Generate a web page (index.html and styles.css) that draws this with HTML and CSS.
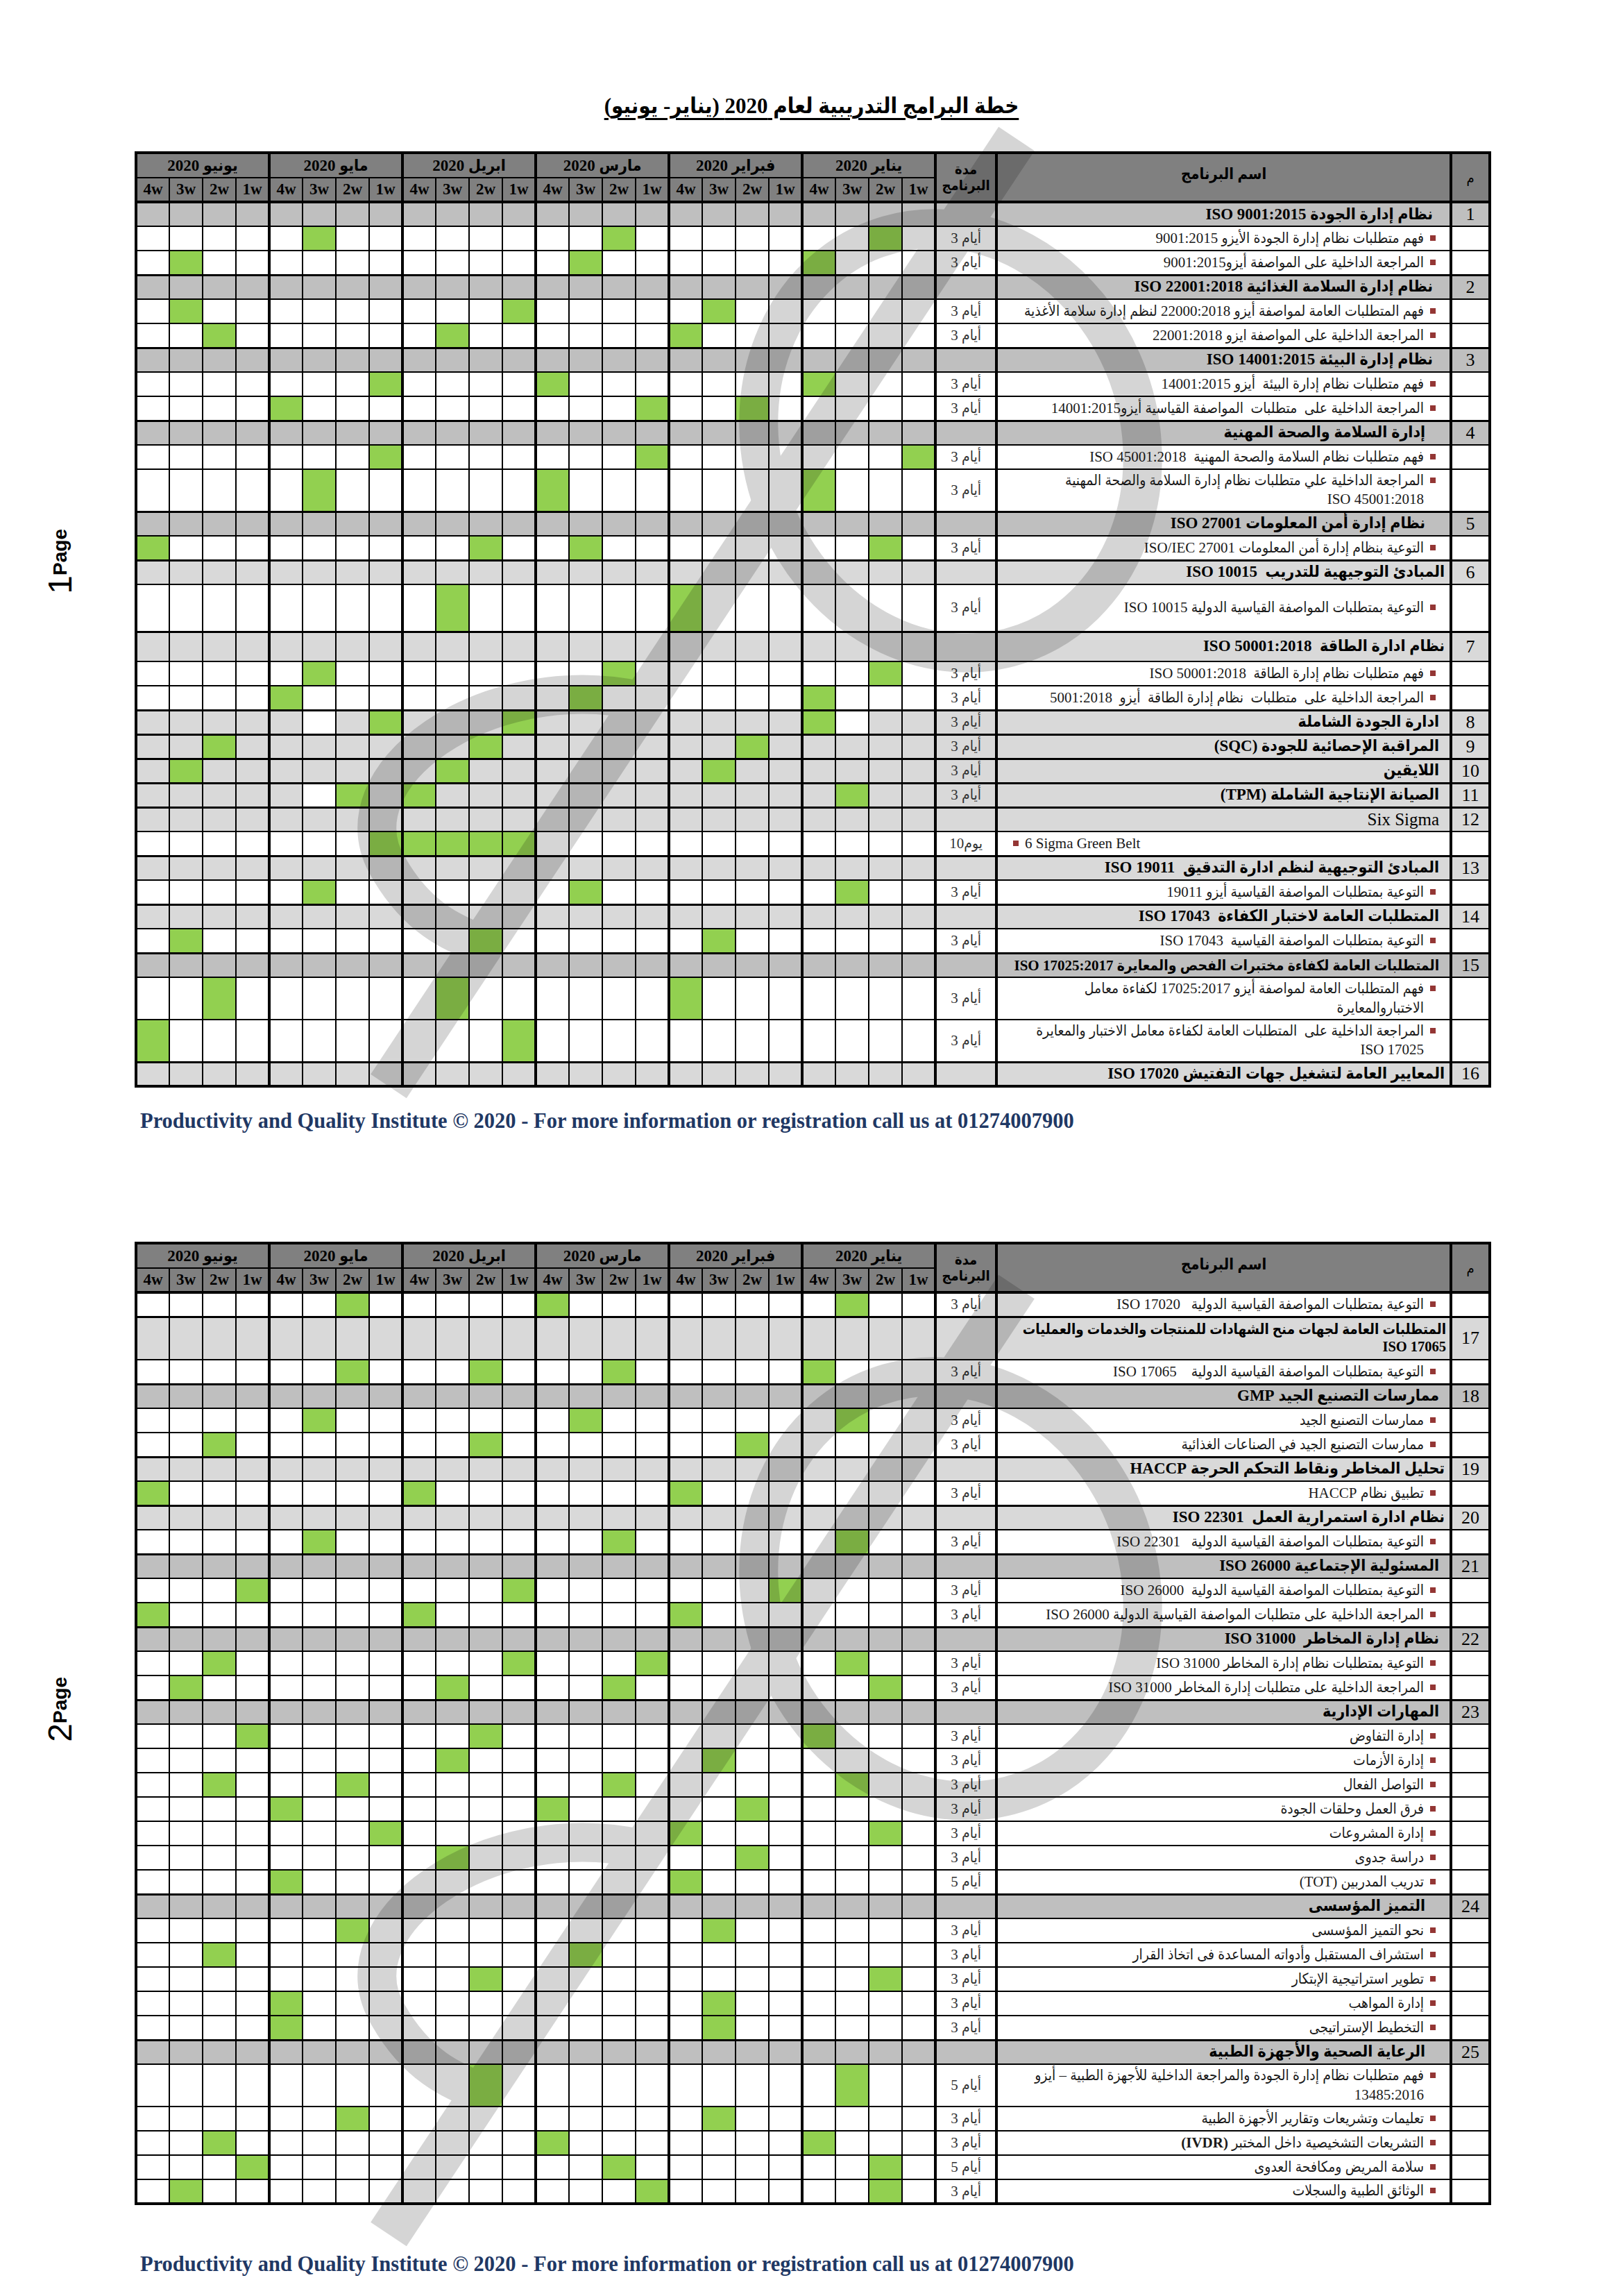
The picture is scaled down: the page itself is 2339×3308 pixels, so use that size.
FILE: index.html
```html
<!DOCTYPE html>
<html lang="ar">
<head>
<meta charset="utf-8">
<title>خطة البرامج التدريبية لعام 2020</title>
<link rel="stylesheet" href="styles.css">
</head>
<body>
<section class="page p1">
  <div class="side"><div class="pagelabel"><span class="pn">1</span><span class="pw">Page</span></div></div>
  <div class="main">
    <h1 class="title">خطة البرامج التدريبية لعام 2020 (يناير- يونيو)</h1>
    <table class="plan">
      <colgroup>
        <col class="cw"><col class="cw"><col class="cw"><col class="cw"><col class="cw"><col class="cw"><col class="cw"><col class="cw"><col class="cw"><col class="cw"><col class="cw"><col class="cw"><col class="cw"><col class="cw"><col class="cw"><col class="cw"><col class="cw"><col class="cw"><col class="cw"><col class="cw"><col class="cw"><col class="cw"><col class="cw"><col class="cw">
        <col class="cd"><col class="cn"><col class="cm">
      </colgroup>
      <tr class="hm"><td colspan="4">يونيو 2020</td><td colspan="4">مايو 2020</td><td colspan="4">ابريل 2020</td><td colspan="4">مارس 2020</td><td colspan="4">فبراير 2020</td><td colspan="4">يناير 2020</td><td rowspan="2" class="hdur">مدة<br>البرنامج</td><td rowspan="2" class="hname">اسم البرنامج</td><td rowspan="2" class="hnum">م</td></tr>
      <tr class="hw"><td>4w</td><td>3w</td><td>2w</td><td>1w</td><td>4w</td><td>3w</td><td>2w</td><td>1w</td><td>4w</td><td>3w</td><td>2w</td><td>1w</td><td>4w</td><td>3w</td><td>2w</td><td>1w</td><td>4w</td><td>3w</td><td>2w</td><td>1w</td><td>4w</td><td>3w</td><td>2w</td><td>1w</td></tr>

      <tr class="grp dark"><td></td><td></td><td></td><td></td><td></td><td></td><td></td><td></td><td></td><td></td><td></td><td></td><td></td><td></td><td></td><td></td><td></td><td></td><td></td><td></td><td></td><td></td><td></td><td></td><td class="d"></td><td class="nm pr24"><div class="gt">نظام إدارة الجودة ISO 9001:2015</div></td><td class="num">1</td></tr>
      <tr class="it"><td></td><td></td><td></td><td></td><td></td><td class="g"></td><td></td><td></td><td></td><td></td><td></td><td></td><td></td><td></td><td class="g"></td><td></td><td></td><td></td><td></td><td></td><td></td><td></td><td class="g"></td><td></td><td class="d">3 أيام</td><td class="nm"><div class="itm"><i class="b"></i><span>فهم متطلبات نظام إدارة الجودة الأيزو 9001:2015</span></div></td><td class="num"></td></tr>
      <tr class="it"><td></td><td class="g"></td><td></td><td></td><td></td><td></td><td></td><td></td><td></td><td></td><td></td><td></td><td></td><td class="g"></td><td></td><td></td><td></td><td></td><td></td><td></td><td class="g"></td><td></td><td></td><td></td><td class="d">3 أيام</td><td class="nm"><div class="itm"><i class="b"></i><span>المراجعة الداخلية على المواصفة أيزو9001:2015</span></div></td><td class="num"></td></tr>

      <tr class="grp dark"><td></td><td></td><td></td><td></td><td></td><td></td><td></td><td></td><td></td><td></td><td></td><td></td><td></td><td></td><td></td><td></td><td></td><td></td><td></td><td></td><td></td><td></td><td></td><td></td><td class="d"></td><td class="nm pr24"><div class="gt">نظام إدارة السلامة الغذائية ISO 22001:2018</div></td><td class="num">2</td></tr>
      <tr class="it"><td></td><td class="g"></td><td></td><td></td><td></td><td></td><td></td><td></td><td></td><td></td><td></td><td class="g"></td><td></td><td></td><td></td><td></td><td></td><td class="g"></td><td></td><td></td><td></td><td></td><td></td><td></td><td class="d">3 أيام</td><td class="nm"><div class="itm"><i class="b"></i><span>فهم المتطلبات العامة لمواصفة أيزو 22000:2018 لنظم إدارة سلامة الأغذية</span></div></td><td class="num"></td></tr>
      <tr class="it"><td></td><td></td><td class="g"></td><td></td><td></td><td></td><td></td><td></td><td></td><td class="g"></td><td></td><td></td><td></td><td></td><td></td><td></td><td class="g"></td><td></td><td></td><td></td><td></td><td></td><td></td><td></td><td class="d">3 أيام</td><td class="nm"><div class="itm"><i class="b"></i><span>المراجعة الداخلية على المواصفة ايزو 22001:2018</span></div></td><td class="num"></td></tr>

      <tr class="grp dark"><td></td><td></td><td></td><td></td><td></td><td></td><td></td><td></td><td></td><td></td><td></td><td></td><td></td><td></td><td></td><td></td><td></td><td></td><td></td><td></td><td></td><td></td><td></td><td></td><td class="d"></td><td class="nm pr24"><div class="gt">نظام إدارة البيئة ISO 14001:2015</div></td><td class="num">3</td></tr>
      <tr class="it"><td></td><td></td><td></td><td></td><td></td><td></td><td></td><td class="g"></td><td></td><td></td><td></td><td></td><td class="g"></td><td></td><td></td><td></td><td></td><td></td><td></td><td></td><td class="g"></td><td></td><td></td><td></td><td class="d">3 أيام</td><td class="nm"><div class="itm"><i class="b"></i><span>فهم متطلبات نظام إدارة البيئة&nbsp; أيزو 14001:2015</span></div></td><td class="num"></td></tr>
      <tr class="it"><td></td><td></td><td></td><td></td><td class="g"></td><td></td><td></td><td></td><td></td><td></td><td></td><td></td><td></td><td></td><td></td><td class="g"></td><td></td><td></td><td class="g"></td><td></td><td></td><td></td><td></td><td></td><td class="d">3 أيام</td><td class="nm"><div class="itm"><i class="b"></i><span>المراجعة الداخلية على&nbsp; متطلبات&nbsp; المواصفة القياسية أيزو14001:2015</span></div></td><td class="num"></td></tr>

      <tr class="grp dark"><td></td><td></td><td></td><td></td><td></td><td></td><td></td><td></td><td></td><td></td><td></td><td></td><td></td><td></td><td></td><td></td><td></td><td></td><td></td><td></td><td></td><td></td><td></td><td></td><td class="d"></td><td class="nm pr35"><div class="gt">إدارة السلامة والصحة المهنية</div></td><td class="num">4</td></tr>
      <tr class="it"><td></td><td></td><td></td><td></td><td></td><td></td><td></td><td class="g"></td><td></td><td></td><td></td><td></td><td></td><td></td><td></td><td class="g"></td><td></td><td></td><td></td><td></td><td></td><td></td><td></td><td class="g"></td><td class="d">3 أيام</td><td class="nm"><div class="itm"><i class="b"></i><span>فهم متطلبات نظام السلامة والصحة المهنية&nbsp; ISO 45001:2018</span></div></td><td class="num"></td></tr>
      <tr class="it tall"><td></td><td></td><td></td><td></td><td></td><td class="g"></td><td></td><td></td><td></td><td></td><td></td><td></td><td class="g"></td><td></td><td></td><td></td><td></td><td></td><td></td><td></td><td class="g"></td><td></td><td></td><td></td><td class="d">3 أيام</td><td class="nm"><div class="itm"><i class="b"></i><span>المراجعة الداخلية علي متطلبات نظام إدارة السلامة والصحة المهنية<br>ISO 45001:2018</span></div></td><td class="num"></td></tr>

      <tr class="grp dark"><td></td><td></td><td></td><td></td><td></td><td></td><td></td><td></td><td></td><td></td><td></td><td></td><td></td><td></td><td></td><td></td><td></td><td></td><td></td><td></td><td></td><td></td><td></td><td></td><td class="d"></td><td class="nm pr35"><div class="gt">نظام إدارة أمن المعلومات ISO 27001</div></td><td class="num">5</td></tr>
      <tr class="it"><td class="g"></td><td></td><td></td><td></td><td></td><td></td><td></td><td></td><td></td><td></td><td class="g"></td><td></td><td></td><td class="g"></td><td></td><td></td><td></td><td></td><td></td><td></td><td></td><td></td><td class="g"></td><td></td><td class="d">3 أيام</td><td class="nm"><div class="itm"><i class="b"></i><span>التوعية بنظام إدارة أمن المعلومات ISO/IEC 27001</span></div></td><td class="num"></td></tr>

      <tr class="grp light"><td></td><td></td><td></td><td></td><td></td><td></td><td></td><td></td><td></td><td></td><td></td><td></td><td></td><td></td><td></td><td></td><td></td><td></td><td></td><td></td><td></td><td></td><td></td><td></td><td class="d"></td><td class="nm pr7"><div class="gt">المبادئ التوجيهية للتدريب&nbsp; ISO 10015</div></td><td class="num">6</td></tr>
      <tr class="it t68"><td></td><td></td><td></td><td></td><td></td><td></td><td></td><td></td><td></td><td class="g"></td><td></td><td></td><td></td><td></td><td></td><td></td><td class="g"></td><td></td><td></td><td></td><td></td><td></td><td></td><td></td><td class="d">3 أيام</td><td class="nm"><div class="itm"><i class="b"></i><span>التوعية بمتطلبات المواصفة القياسية الدولية ISO 10015</span></div></td><td class="num"></td></tr>

      <tr class="grp light t43"><td></td><td></td><td></td><td></td><td></td><td></td><td></td><td></td><td></td><td></td><td></td><td></td><td></td><td></td><td></td><td></td><td></td><td></td><td></td><td></td><td></td><td></td><td></td><td></td><td class="d"></td><td class="nm pr7"><div class="gt">نظام ادارة الطاقة&nbsp; ISO 50001:2018</div></td><td class="num">7</td></tr>
      <tr class="it"><td></td><td></td><td></td><td></td><td></td><td class="g"></td><td></td><td></td><td></td><td></td><td></td><td></td><td></td><td></td><td class="g"></td><td></td><td></td><td></td><td></td><td></td><td></td><td></td><td class="g"></td><td></td><td class="d">3 أيام</td><td class="nm"><div class="itm"><i class="b"></i><span>فهم متطلبات نظام إدارة الطاقة&nbsp; ISO 50001:2018</span></div></td><td class="num"></td></tr>
      <tr class="it"><td></td><td></td><td></td><td></td><td class="g"></td><td></td><td></td><td></td><td></td><td></td><td></td><td></td><td></td><td class="g"></td><td></td><td></td><td></td><td></td><td></td><td></td><td class="g"></td><td></td><td></td><td></td><td class="d">3 أيام</td><td class="nm"><div class="itm"><i class="b"></i><span>المراجعة الداخلية على&nbsp; متطلبات&nbsp; نظام إدارة الطاقة&nbsp; أيزو&nbsp; 5001:2018</span></div></td><td class="num"></td></tr>

      <tr class="solo light"><td></td><td></td><td></td><td></td><td></td><td class="w"></td><td></td><td class="g"></td><td></td><td></td><td></td><td class="g"></td><td></td><td></td><td></td><td></td><td></td><td></td><td></td><td></td><td class="g"></td><td class="w"></td><td></td><td></td><td class="d">3 أيام</td><td class="nm pr15"><div class="gt">ادارة الجودة الشاملة</div></td><td class="num">8</td></tr>
      <tr class="solo light"><td></td><td></td><td class="g"></td><td></td><td></td><td></td><td></td><td></td><td></td><td></td><td class="g"></td><td></td><td></td><td></td><td></td><td></td><td></td><td></td><td class="g"></td><td></td><td></td><td></td><td></td><td></td><td class="d">3 أيام</td><td class="nm pr15"><div class="gt">المراقبة الإحصائية للجودة (SQC)</div></td><td class="num">9</td></tr>
      <tr class="solo light"><td></td><td class="g"></td><td></td><td></td><td></td><td></td><td></td><td></td><td></td><td class="g"></td><td></td><td></td><td></td><td></td><td></td><td></td><td></td><td class="g"></td><td></td><td></td><td></td><td></td><td></td><td></td><td class="d">3 أيام</td><td class="nm pr15"><div class="gt">اللايقين</div></td><td class="num">10</td></tr>
      <tr class="solo light"><td></td><td></td><td></td><td></td><td></td><td class="w"></td><td class="g"></td><td></td><td class="g"></td><td></td><td></td><td></td><td></td><td></td><td></td><td></td><td></td><td></td><td></td><td></td><td></td><td class="g"></td><td></td><td></td><td class="d">3 أيام</td><td class="nm pr15"><div class="gt">الصيانة الإنتاجية الشاملة (TPM)</div></td><td class="num">11</td></tr>
      <tr class="solo light"><td></td><td></td><td></td><td></td><td></td><td></td><td></td><td></td><td></td><td></td><td></td><td></td><td></td><td></td><td></td><td></td><td></td><td></td><td></td><td></td><td></td><td></td><td></td><td></td><td class="d"></td><td class="nm pr15"><div class="gt reg">Six Sigma</div></td><td class="num">12</td></tr>
      <tr class="it"><td></td><td></td><td></td><td></td><td></td><td></td><td></td><td class="g"></td><td class="g"></td><td class="g"></td><td class="g"></td><td class="g"></td><td></td><td></td><td></td><td></td><td></td><td></td><td></td><td></td><td></td><td></td><td></td><td></td><td class="d">10يوم</td><td class="nm ltr"><div class="itm"><i class="b"></i><span>6 Sigma Green Belt</span></div></td><td class="num"></td></tr>

      <tr class="grp light"><td></td><td></td><td></td><td></td><td></td><td></td><td></td><td></td><td></td><td></td><td></td><td></td><td></td><td></td><td></td><td></td><td></td><td></td><td></td><td></td><td></td><td></td><td></td><td></td><td class="d"></td><td class="nm pr15"><div class="gt">المبادئ التوجيهية لنظم ادارة التدقيق&nbsp; ISO 19011</div></td><td class="num">13</td></tr>
      <tr class="it"><td></td><td></td><td></td><td></td><td></td><td class="g"></td><td></td><td></td><td></td><td></td><td></td><td></td><td></td><td class="g"></td><td></td><td></td><td></td><td></td><td></td><td></td><td></td><td class="g"></td><td></td><td></td><td class="d">3 أيام</td><td class="nm"><div class="itm"><i class="b"></i><span>التوعية بمتطلبات المواصفة القياسية أيزو 19011</span></div></td><td class="num"></td></tr>

      <tr class="grp light"><td></td><td></td><td></td><td></td><td></td><td></td><td></td><td></td><td></td><td></td><td></td><td></td><td></td><td></td><td></td><td></td><td></td><td></td><td></td><td></td><td></td><td></td><td></td><td></td><td class="d"></td><td class="nm pr15"><div class="gt">المتطلبات العامة لاختبار الكفاءة&nbsp; ISO 17043</div></td><td class="num">14</td></tr>
      <tr class="it"><td></td><td class="g"></td><td></td><td></td><td></td><td></td><td></td><td></td><td></td><td></td><td class="g"></td><td></td><td></td><td></td><td></td><td></td><td></td><td class="g"></td><td></td><td></td><td></td><td></td><td></td><td></td><td class="d">3 أيام</td><td class="nm"><div class="itm"><i class="b"></i><span>التوعية بمتطلبات المواصفة القياسية&nbsp; ISO 17043</span></div></td><td class="num"></td></tr>

      <tr class="grp dark"><td></td><td></td><td></td><td></td><td></td><td></td><td></td><td></td><td></td><td></td><td></td><td></td><td></td><td></td><td></td><td></td><td></td><td></td><td></td><td></td><td></td><td></td><td></td><td></td><td class="d"></td><td class="nm pr15"><div class="gt sm">المتطلبات العامة لكفاءة مختبرات الفحص والمعايرة ISO 17025:2017</div></td><td class="num">15</td></tr>
      <tr class="it tall"><td></td><td></td><td class="g"></td><td></td><td></td><td></td><td></td><td></td><td></td><td class="g"></td><td></td><td></td><td></td><td></td><td></td><td></td><td class="g"></td><td></td><td></td><td></td><td></td><td></td><td></td><td></td><td class="d">3 أيام</td><td class="nm"><div class="itm"><i class="b"></i><span>فهم المتطلبات العامة لمواصفة أيزو 17025:2017 لكفاءة معامل<br>الاختباروالمعايرة</span></div></td><td class="num"></td></tr>
      <tr class="it tall"><td class="g"></td><td></td><td></td><td></td><td></td><td></td><td></td><td></td><td></td><td></td><td></td><td class="g"></td><td></td><td></td><td></td><td></td><td></td><td></td><td></td><td></td><td></td><td></td><td></td><td></td><td class="d">3 أيام</td><td class="nm"><div class="itm"><i class="b"></i><span>المراجعة الداخلية على&nbsp; المتطلبات العامة لكفاءة معامل الاختبار والمعايرة<br>ISO 17025</span></div></td><td class="num"></td></tr>

      <tr class="grp light"><td></td><td></td><td></td><td></td><td></td><td></td><td></td><td></td><td></td><td></td><td></td><td></td><td></td><td></td><td></td><td></td><td></td><td></td><td></td><td></td><td></td><td></td><td></td><td></td><td class="d"></td><td class="nm pr7"><div class="gt">المعايير العامة لتشغيل جهات التفتيش ISO 17020</div></td><td class="num">16</td></tr>
    </table>
    <p class="foot">Productivity and Quality Institute © 2020 - For more information or registration call us at 01274007900</p>
  </div>
  <svg class="wm" viewBox="0 0 2339 1654" aria-hidden="true">
    <g opacity="0.16" fill="none" stroke="#000">
      <ellipse cx="1370" cy="635" rx="272" ry="310" transform="rotate(-20 1370 635)" stroke-width="56"/>
      <path d="M1465 200 L560 1565" stroke-width="62"/>
      <path d="M925 1010 C700 960 480 1120 560 1250 C600 1320 650 1345 700 1362" stroke-width="56"/>
    </g>
  </svg>
</section>

<section class="page p2">
  <div class="side"><div class="pagelabel"><span class="pn">2</span><span class="pw">Page</span></div></div>
  <div class="main">
    <table class="plan">
      <colgroup>
        <col class="cw"><col class="cw"><col class="cw"><col class="cw"><col class="cw"><col class="cw"><col class="cw"><col class="cw"><col class="cw"><col class="cw"><col class="cw"><col class="cw"><col class="cw"><col class="cw"><col class="cw"><col class="cw"><col class="cw"><col class="cw"><col class="cw"><col class="cw"><col class="cw"><col class="cw"><col class="cw"><col class="cw">
        <col class="cd"><col class="cn"><col class="cm">
      </colgroup>
      <tr class="hm"><td colspan="4">يونيو 2020</td><td colspan="4">مايو 2020</td><td colspan="4">ابريل 2020</td><td colspan="4">مارس 2020</td><td colspan="4">فبراير 2020</td><td colspan="4">يناير 2020</td><td rowspan="2" class="hdur">مدة<br>البرنامج</td><td rowspan="2" class="hname">اسم البرنامج</td><td rowspan="2" class="hnum">م</td></tr>
      <tr class="hw"><td>4w</td><td>3w</td><td>2w</td><td>1w</td><td>4w</td><td>3w</td><td>2w</td><td>1w</td><td>4w</td><td>3w</td><td>2w</td><td>1w</td><td>4w</td><td>3w</td><td>2w</td><td>1w</td><td>4w</td><td>3w</td><td>2w</td><td>1w</td><td>4w</td><td>3w</td><td>2w</td><td>1w</td></tr>

      <tr class="it"><td></td><td></td><td></td><td></td><td></td><td></td><td class="g"></td><td></td><td></td><td></td><td></td><td></td><td class="g"></td><td></td><td></td><td></td><td></td><td></td><td></td><td></td><td></td><td class="g"></td><td></td><td></td><td class="d">3 أيام</td><td class="nm"><div class="itm"><i class="b"></i><span>التوعية بمتطلبات المواصفة القياسية الدولية&nbsp;&nbsp; ISO 17020</span></div></td><td class="num"></td></tr>

      <tr class="grp light tall2"><td></td><td></td><td></td><td></td><td></td><td></td><td></td><td></td><td></td><td></td><td></td><td></td><td></td><td></td><td></td><td></td><td></td><td></td><td></td><td></td><td></td><td></td><td></td><td></td><td class="d"></td><td class="nm pr5"><div class="gt one">المتطلبات العامة لجهات منح الشهادات للمنتجات والخدمات والعمليات<br>ISO 17065</div></td><td class="num">17</td></tr>
      <tr class="it"><td></td><td></td><td></td><td></td><td></td><td></td><td class="g"></td><td></td><td></td><td></td><td class="g"></td><td></td><td></td><td></td><td class="g"></td><td></td><td></td><td></td><td></td><td></td><td class="g"></td><td></td><td></td><td></td><td class="d">3 أيام</td><td class="nm"><div class="itm"><i class="b"></i><span>التوعية بمتطلبات المواصفة القياسية الدولية&nbsp;&nbsp;&nbsp; ISO 17065</span></div></td><td class="num"></td></tr>

      <tr class="grp dark"><td></td><td></td><td></td><td></td><td></td><td></td><td></td><td></td><td></td><td></td><td></td><td></td><td></td><td></td><td></td><td></td><td></td><td></td><td></td><td></td><td></td><td></td><td></td><td></td><td class="d"></td><td class="nm pr15"><div class="gt">ممارسات التصنيع الجيد GMP</div></td><td class="num">18</td></tr>
      <tr class="it"><td></td><td></td><td></td><td></td><td></td><td class="g"></td><td></td><td></td><td></td><td></td><td></td><td></td><td></td><td class="g"></td><td></td><td></td><td></td><td></td><td></td><td></td><td></td><td class="g"></td><td></td><td></td><td class="d">3 أيام</td><td class="nm"><div class="itm"><i class="b"></i><span>ممارسات التصنيع الجيد</span></div></td><td class="num"></td></tr>
      <tr class="it"><td></td><td></td><td class="g"></td><td></td><td></td><td></td><td></td><td></td><td></td><td></td><td class="g"></td><td></td><td></td><td></td><td></td><td></td><td></td><td></td><td class="g"></td><td></td><td></td><td></td><td></td><td></td><td class="d">3 أيام</td><td class="nm"><div class="itm"><i class="b"></i><span>ممارسات التصنيع الجيد في الصناعات الغذائية</span></div></td><td class="num"></td></tr>

      <tr class="grp light"><td></td><td></td><td></td><td></td><td></td><td></td><td></td><td></td><td></td><td></td><td></td><td></td><td></td><td></td><td></td><td></td><td></td><td></td><td></td><td></td><td></td><td></td><td></td><td></td><td class="d"></td><td class="nm pr7"><div class="gt">تحليل المخاطر ونقاط التحكم الحرجة HACCP</div></td><td class="num">19</td></tr>
      <tr class="it"><td class="g"></td><td></td><td></td><td></td><td></td><td></td><td></td><td></td><td class="g"></td><td></td><td></td><td></td><td></td><td></td><td></td><td></td><td class="g"></td><td></td><td></td><td></td><td></td><td></td><td></td><td></td><td class="d">3 أيام</td><td class="nm"><div class="itm"><i class="b"></i><span>تطبيق نظام HACCP</span></div></td><td class="num"></td></tr>

      <tr class="grp light"><td></td><td></td><td></td><td></td><td></td><td></td><td></td><td></td><td></td><td></td><td></td><td></td><td></td><td></td><td></td><td></td><td></td><td></td><td></td><td></td><td></td><td></td><td></td><td></td><td class="d"></td><td class="nm pr7"><div class="gt">نظام ادارة استمرارية العمل&nbsp; ISO 22301</div></td><td class="num">20</td></tr>
      <tr class="it"><td></td><td></td><td></td><td></td><td></td><td class="g"></td><td></td><td></td><td></td><td></td><td></td><td></td><td></td><td></td><td class="g"></td><td></td><td></td><td></td><td></td><td></td><td></td><td class="g"></td><td></td><td></td><td class="d">3 أيام</td><td class="nm"><div class="itm"><i class="b"></i><span>التوعية بمتطلبات المواصفة القياسية الدولية&nbsp;&nbsp; ISO 22301</span></div></td><td class="num"></td></tr>

      <tr class="grp dark"><td></td><td></td><td></td><td></td><td></td><td></td><td></td><td></td><td></td><td></td><td></td><td></td><td></td><td></td><td></td><td></td><td></td><td></td><td></td><td></td><td></td><td></td><td></td><td></td><td class="d"></td><td class="nm pr15"><div class="gt">المسئولية الإجتماعية ISO 26000</div></td><td class="num">21</td></tr>
      <tr class="it"><td></td><td></td><td></td><td class="g"></td><td></td><td></td><td></td><td></td><td></td><td></td><td></td><td class="g"></td><td></td><td></td><td></td><td></td><td></td><td></td><td></td><td class="g"></td><td></td><td></td><td></td><td></td><td class="d">3 أيام</td><td class="nm"><div class="itm"><i class="b"></i><span>التوعية بمتطلبات المواصفة القياسية الدولية&nbsp; ISO 26000</span></div></td><td class="num"></td></tr>
      <tr class="it"><td class="g"></td><td></td><td></td><td></td><td></td><td></td><td></td><td></td><td class="g"></td><td></td><td></td><td></td><td></td><td></td><td></td><td></td><td class="g"></td><td></td><td></td><td></td><td></td><td></td><td></td><td></td><td class="d">3 أيام</td><td class="nm"><div class="itm"><i class="b"></i><span>المراجعة الداخلية على متطلبات المواصفة القياسية الدولية ISO 26000</span></div></td><td class="num"></td></tr>

      <tr class="grp dark"><td></td><td></td><td></td><td></td><td></td><td></td><td></td><td></td><td></td><td></td><td></td><td></td><td></td><td></td><td></td><td></td><td></td><td></td><td></td><td></td><td></td><td></td><td></td><td></td><td class="d"></td><td class="nm pr15"><div class="gt">نظام إدارة المخاطر&nbsp; ISO 31000</div></td><td class="num">22</td></tr>
      <tr class="it"><td></td><td></td><td class="g"></td><td></td><td></td><td></td><td></td><td></td><td></td><td></td><td></td><td class="g"></td><td></td><td></td><td></td><td class="g"></td><td></td><td></td><td></td><td></td><td></td><td class="g"></td><td></td><td></td><td class="d">3 أيام</td><td class="nm"><div class="itm"><i class="b"></i><span>التوعية بمتطلبات نظام إدارة المخاطر ISO 31000</span></div></td><td class="num"></td></tr>
      <tr class="it"><td></td><td class="g"></td><td></td><td></td><td></td><td></td><td></td><td></td><td></td><td class="g"></td><td></td><td></td><td></td><td></td><td class="g"></td><td></td><td></td><td></td><td></td><td></td><td></td><td></td><td class="g"></td><td></td><td class="d">3 أيام</td><td class="nm"><div class="itm"><i class="b"></i><span>المراجعة الداخلية على متطلبات إدارة المخاطر ISO 31000</span></div></td><td class="num"></td></tr>

      <tr class="grp dark"><td></td><td></td><td></td><td></td><td></td><td></td><td></td><td></td><td></td><td></td><td></td><td></td><td></td><td></td><td></td><td></td><td></td><td></td><td></td><td></td><td></td><td></td><td></td><td></td><td class="d"></td><td class="nm pr15"><div class="gt">المهارات الإدارية</div></td><td class="num">23</td></tr>
      <tr class="it"><td></td><td></td><td></td><td class="g"></td><td></td><td></td><td></td><td></td><td></td><td></td><td class="g"></td><td></td><td></td><td></td><td></td><td></td><td></td><td></td><td></td><td></td><td class="g"></td><td></td><td></td><td></td><td class="d">3 أيام</td><td class="nm"><div class="itm"><i class="b"></i><span>إدارة التفاوض</span></div></td><td class="num"></td></tr>
      <tr class="it"><td></td><td></td><td></td><td></td><td></td><td></td><td></td><td></td><td></td><td class="g"></td><td></td><td></td><td></td><td></td><td></td><td></td><td></td><td class="g"></td><td></td><td></td><td></td><td></td><td></td><td></td><td class="d">3 أيام</td><td class="nm"><div class="itm"><i class="b"></i><span>إدارة الأزمات</span></div></td><td class="num"></td></tr>
      <tr class="it"><td></td><td></td><td class="g"></td><td></td><td></td><td></td><td class="g"></td><td></td><td></td><td></td><td></td><td></td><td></td><td></td><td class="g"></td><td></td><td></td><td></td><td></td><td></td><td></td><td class="g"></td><td></td><td></td><td class="d">3 أيام</td><td class="nm"><div class="itm"><i class="b"></i><span>التواصل الفعال</span></div></td><td class="num"></td></tr>
      <tr class="it"><td></td><td></td><td></td><td></td><td class="g"></td><td></td><td></td><td></td><td></td><td></td><td></td><td></td><td class="g"></td><td></td><td></td><td></td><td></td><td></td><td class="g"></td><td></td><td></td><td></td><td></td><td></td><td class="d">3 أيام</td><td class="nm"><div class="itm"><i class="b"></i><span>فرق العمل وحلقات الجودة</span></div></td><td class="num"></td></tr>
      <tr class="it"><td></td><td></td><td></td><td></td><td></td><td></td><td></td><td class="g"></td><td></td><td></td><td></td><td></td><td></td><td></td><td></td><td></td><td class="g"></td><td></td><td></td><td></td><td></td><td></td><td class="g"></td><td></td><td class="d">3 أيام</td><td class="nm"><div class="itm"><i class="b"></i><span>إدارة المشروعات</span></div></td><td class="num"></td></tr>
      <tr class="it"><td></td><td></td><td></td><td></td><td></td><td></td><td></td><td></td><td></td><td class="g"></td><td></td><td></td><td></td><td></td><td></td><td></td><td></td><td></td><td class="g"></td><td></td><td></td><td></td><td></td><td></td><td class="d">3 أيام</td><td class="nm"><div class="itm"><i class="b"></i><span>دراسة جدوى</span></div></td><td class="num"></td></tr>
      <tr class="it"><td></td><td></td><td></td><td></td><td class="g"></td><td></td><td></td><td></td><td></td><td></td><td></td><td></td><td></td><td></td><td></td><td></td><td class="g"></td><td></td><td></td><td></td><td></td><td></td><td></td><td></td><td class="d">5 أيام</td><td class="nm"><div class="itm"><i class="b"></i><span>تدريب المدربين (TOT)</span></div></td><td class="num"></td></tr>

      <tr class="grp dark"><td></td><td></td><td></td><td></td><td></td><td></td><td></td><td></td><td></td><td></td><td></td><td></td><td></td><td></td><td></td><td></td><td></td><td></td><td></td><td></td><td></td><td></td><td></td><td></td><td class="d"></td><td class="nm pr35"><div class="gt">التميز المؤسسى</div></td><td class="num">24</td></tr>
      <tr class="it"><td></td><td></td><td></td><td></td><td></td><td></td><td class="g"></td><td></td><td></td><td></td><td></td><td></td><td></td><td></td><td></td><td></td><td></td><td class="g"></td><td></td><td></td><td></td><td></td><td></td><td></td><td class="d">3 أيام</td><td class="nm"><div class="itm"><i class="b"></i><span>نحو التميز المؤسسى</span></div></td><td class="num"></td></tr>
      <tr class="it"><td></td><td></td><td class="g"></td><td></td><td></td><td></td><td></td><td></td><td></td><td></td><td></td><td></td><td></td><td class="g"></td><td></td><td></td><td></td><td></td><td></td><td></td><td></td><td></td><td></td><td></td><td class="d">3 أيام</td><td class="nm"><div class="itm"><i class="b"></i><span>استشراف المستقبل وأدواته المساعدة فى اتخاذ القرار</span></div></td><td class="num"></td></tr>
      <tr class="it"><td></td><td></td><td></td><td></td><td></td><td></td><td></td><td></td><td></td><td></td><td class="g"></td><td></td><td></td><td></td><td></td><td></td><td></td><td></td><td></td><td></td><td></td><td></td><td class="g"></td><td></td><td class="d">3 أيام</td><td class="nm"><div class="itm"><i class="b"></i><span>تطوير استراتيجية الإبتكار</span></div></td><td class="num"></td></tr>
      <tr class="it"><td></td><td></td><td></td><td></td><td class="g"></td><td></td><td></td><td></td><td></td><td></td><td></td><td></td><td></td><td></td><td></td><td></td><td></td><td class="g"></td><td></td><td></td><td></td><td></td><td></td><td></td><td class="d">3 أيام</td><td class="nm"><div class="itm"><i class="b"></i><span>إدارة المواهب</span></div></td><td class="num"></td></tr>
      <tr class="it"><td></td><td></td><td></td><td></td><td class="g"></td><td></td><td></td><td></td><td></td><td></td><td></td><td></td><td></td><td></td><td></td><td></td><td></td><td class="g"></td><td></td><td></td><td></td><td></td><td></td><td></td><td class="d">3 أيام</td><td class="nm"><div class="itm"><i class="b"></i><span>التخطيط الإستراتيجى</span></div></td><td class="num"></td></tr>

      <tr class="grp dark"><td></td><td></td><td></td><td></td><td></td><td></td><td></td><td></td><td></td><td></td><td></td><td></td><td></td><td></td><td></td><td></td><td></td><td></td><td></td><td></td><td></td><td></td><td></td><td></td><td class="d"></td><td class="nm pr35"><div class="gt">الرعاية الصحية والأجهزة الطبية</div></td><td class="num">25</td></tr>
      <tr class="it tall"><td></td><td></td><td></td><td></td><td></td><td></td><td></td><td></td><td></td><td></td><td class="g"></td><td></td><td></td><td></td><td></td><td></td><td></td><td></td><td></td><td></td><td></td><td class="g"></td><td></td><td></td><td class="d">5 أيام</td><td class="nm"><div class="itm"><i class="b"></i><span>فهم متطلبات نظام إدارة الجودة والمراجعة الداخلية للأجهزة الطبية – أيزو<br>13485:2016</span></div></td><td class="num"></td></tr>
      <tr class="it"><td></td><td></td><td></td><td></td><td></td><td></td><td class="g"></td><td></td><td></td><td></td><td></td><td></td><td></td><td></td><td></td><td></td><td></td><td class="g"></td><td></td><td></td><td></td><td></td><td></td><td></td><td class="d">3 أيام</td><td class="nm"><div class="itm"><i class="b"></i><span>تعليمات وتشريعات وتقارير الأجهزة الطبية</span></div></td><td class="num"></td></tr>
      <tr class="it"><td></td><td></td><td class="g"></td><td></td><td></td><td></td><td></td><td></td><td></td><td></td><td></td><td></td><td class="g"></td><td></td><td></td><td></td><td></td><td></td><td></td><td></td><td class="g"></td><td></td><td></td><td></td><td class="d">3 أيام</td><td class="nm"><div class="itm"><i class="b"></i><span>التشريعات التشخيصية داخل المختبر <b>(IVDR)</b></span></div></td><td class="num"></td></tr>
      <tr class="it"><td></td><td></td><td></td><td class="g"></td><td></td><td></td><td></td><td></td><td></td><td></td><td></td><td></td><td></td><td></td><td class="g"></td><td></td><td></td><td></td><td></td><td></td><td></td><td></td><td class="g"></td><td></td><td class="d">5 أيام</td><td class="nm"><div class="itm"><i class="b"></i><span>سلامة المريض ومكافحة العدوى</span></div></td><td class="num"></td></tr>
      <tr class="it"><td></td><td class="g"></td><td></td><td></td><td></td><td></td><td></td><td></td><td></td><td></td><td></td><td></td><td></td><td></td><td></td><td class="g"></td><td></td><td></td><td></td><td></td><td></td><td></td><td class="g"></td><td></td><td class="d">3 أيام</td><td class="nm"><div class="itm"><i class="b"></i><span>الوثائق الطبية والسجلات</span></div></td><td class="num"></td></tr>
    </table>
    <p class="foot">Productivity and Quality Institute © 2020 - For more information or registration call us at 01274007900</p>
  </div>
  <svg class="wm" viewBox="0 0 2339 1654" aria-hidden="true">
    <g opacity="0.16" fill="none" stroke="#000">
      <ellipse cx="1370" cy="635" rx="272" ry="310" transform="rotate(-20 1370 635)" stroke-width="56"/>
      <path d="M1465 200 L560 1565" stroke-width="62"/>
      <path d="M925 1010 C700 960 480 1120 560 1250 C600 1320 650 1345 700 1362" stroke-width="56"/>
    </g>
  </svg>
</section>
</body>
</html>
```

FILE: styles.css
```css
* { box-sizing: border-box; }
html, body { margin: 0; padding: 0; background: #fff; }
body {
  width: 2339px;
  font-family: "Liberation Serif", "DejaVu Sans Condensed", "DejaVu Sans", serif;
  color: #000;
}

.page {
  position: relative;
  height: 1654px;
  display: flex;
  overflow: hidden;
}
.side {
  width: 194px;
  flex: none;
  display: flex;
  align-items: center;
  justify-content: center;
  padding-right: 20px;
  padding-bottom: 36px;
}
.pagelabel {
  writing-mode: vertical-rl;
  transform: rotate(180deg);
  font-family: "Liberation Sans", "DejaVu Sans", sans-serif;
  white-space: nowrap;
  line-height: 1;
}
.pn { font-size: 48px; }
.pw { font-size: 28px; font-weight: 700; }

.main { width: 1951px; flex: none; }
.p1 .main { padding-top: 128px; }
.p2 .main { padding-top: 135px; }

.title {
  margin: 0 0 40px;
  height: 50px;
  line-height: 50px;
  text-align: center;
  direction: rtl;
  font-size: 31px;
  font-weight: 700;
  text-decoration: underline;
  text-decoration-thickness: 3px;
  text-underline-offset: 7px;
}

.plan {
  width: 1951px;
  table-layout: fixed;
  border-collapse: collapse;
  border: 4px solid #000;
}
.cw { width: 48px; }
.cd { width: 88px; }
.cn { width: 655px; }
.cm { width: 56px; }

.plan td {
  border: 2px solid #000;
  padding: 0;
  height: 35px;
  background: #fff;
}
.plan tr > td:nth-child(4n+1) { border-left-width: 4px; }
.plan td.d, .plan td.nm, .plan td.num { border-left-width: 4px; }

.hm td, .hw td { background: #808080; font-weight: 700; text-align: center; }
.hm td { height: 36px; font-size: 23px; direction: rtl; border-left-width: 4px; }
.hw td { height: 35px; font-size: 23px; }
.hm td.hdur { font-size: 20px; line-height: 1.15; direction: rtl; border-bottom-width: 4px; }
.hm td.hname { font-size: 22px; direction: rtl; border-bottom-width: 4px; padding-bottom: 10px; }
.hm td.hnum { font-size: 20px; font-weight: 400; border-bottom-width: 4px; }
.hw td { border-bottom-width: 4px; }

.grp td, .solo td { border-top-width: 3px; }
.dark td { background: #bfbfbf; }
.light td { background: #d9d9d9; }
.plan td.g { background: #92d050; }
.plan td.w { background: #fff; }

.tall td { height: 61px; }
.tall2 td { height: 62px; }
.t68 td { height: 68px; }
.t43 td { height: 43px; }

.d {
  direction: ltr;
  text-align: center;
  font-size: 21px;
  color: #333;
}
.num {
  text-align: center;
  font-size: 26px;
}
.nm {
  direction: rtl;
  text-align: right;
  padding-right: 20px !important;
}
.nm.pr5 { padding-right: 5px !important; }
.nm.pr7 { padding-right: 7px !important; }
.nm.pr15 { padding-right: 15px !important; }
.nm.pr24 { padding-right: 24px !important; }
.nm.pr35 { padding-right: 35px !important; }

.gt {
  font-size: 23px;
  font-weight: 700;
  line-height: 1.25;
}
.gt.sm { font-size: 21px; }
.gt.one { font-size: 20.5px; white-space: nowrap; }
.gt.reg { font-weight: 400; font-size: 25px; }

.itm {
  display: flex;
  align-items: flex-start;
  gap: 9px;
  font-size: 21px;
  line-height: 1.3;
  color: #1a1a1a;
}
.itm .b {
  flex: none;
  width: 8px;
  height: 8px;
  margin-top: 9px;
  background: #943634;
}
.itm b { font-weight: 700; }
.nm.ltr {
  direction: ltr;
  text-align: left;
  padding-right: 0 !important;
  padding-left: 22px;
}

.foot {
  margin: 0;
  padding-left: 8px;
  font-weight: 700;
  font-size: 30.5px;
  line-height: 34px;
  color: #1f3864;
  white-space: nowrap;
}
.p1 .foot { margin-top: 31px; }
.p2 .foot { margin-top: 68px; }

.wm {
  position: absolute;
  left: 0;
  top: 0;
  width: 2339px;
  height: 1654px;
  pointer-events: none;
}
```
